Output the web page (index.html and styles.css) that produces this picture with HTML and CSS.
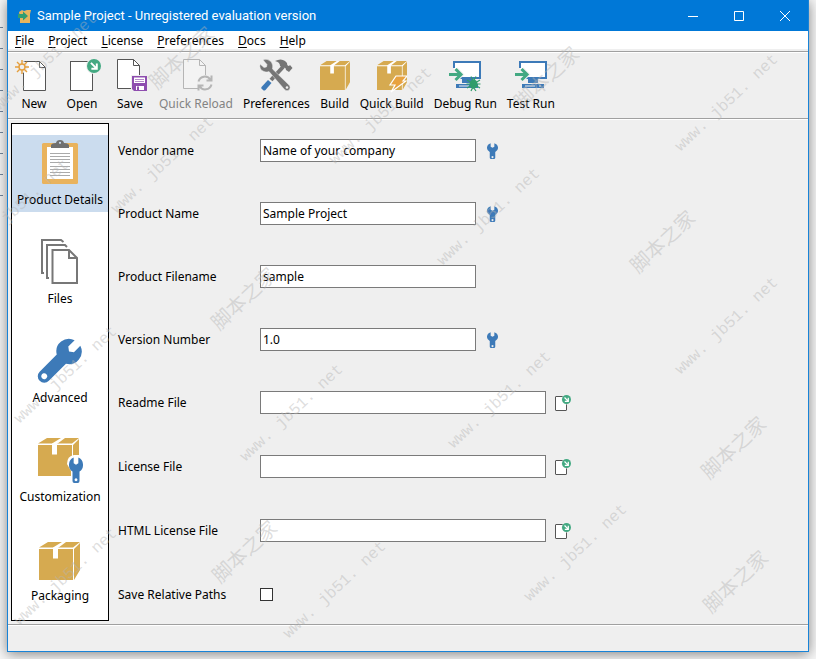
FILE: index.html
```html
<!DOCTYPE html>
<html lang="en">
<head>
<meta charset="utf-8">
<title>Sample Project</title>
<link rel="stylesheet" href="styles.css">
</head>
<body>
<svg class="defs" aria-hidden="true">
  <symbol id="box" viewBox="0 0 41 38" preserveAspectRatio="none">
    <path fill="#fff" d="M0 5.500 9 0H41V28L35 38H0Z"/>
    <path fill="#d6aa50" d="M0 7H34V38H0ZM0 5.500 9 0H41L34 5.500ZM35 7 41 1V28L35 38Z"/>
    <path fill="#fff" d="M14 16.500V5.500L23 0H27L19 6V16.500Z"/>
  </symbol>
  <symbol id="wrench" viewBox="0 0 24 40" preserveAspectRatio="none">
    <path fill="#3d7ab8" fill-rule="evenodd" d="M8 .7V9.500L12 12 16 9.500V.7A12 12 0 0 1 18 22.400V37Q18 40 15 40H9Q6 40 6 37V22.400A12 12 0 0 1 8 .7ZM12 32.500a2.400 2.400 0 1 0 .01 0Z"/>
  </symbol>
  <symbol id="go" viewBox="0 0 16 16">
    <circle cx="8" cy="8" r="8" fill="#43a982"/>
    <path d="M4.500 4.500 10.500 10.500M11.200 5V11.200H5" fill="none" stroke="#fff" stroke-width="2.200"/>
  </symbol>
  <symbol id="browse" viewBox="0 0 16 16">
    <rect x=".5" y="1.500" width="11" height="14" rx=".5" fill="#fff" stroke="#555"/>
    <circle cx="11.500" cy="4.500" r="5" fill="#efefef"/>
    <use href="#go" x="7" y="0" width="9" height="9"/>
  </symbol>
  <symbol id="monitor" viewBox="0 0 36 36">
    <path d="M7 5H33V21H7Z" fill="#fff"/>
    <path d="M7 11V5H33V21H12" fill="none" stroke="#3d7ab8" stroke-width="2"/>
    <path d="M15 22H25V26H15ZM9 27H31V31H9Z" fill="#3d7ab8"/>
    <path d="M12 29H22M26 29H28" stroke="#efefef"/>
    <path d="M2 17.500H13M8.500 12 14 17.500 8.500 23" fill="none" stroke="#efefef" stroke-width="5"/>
    <path d="M2 17.500H13M8.500 12 14 17.500 8.500 23" fill="none" stroke="#43a982" stroke-width="3"/>
  </symbol>
</svg>

<div class="window">
  <header class="titlebar">
    <svg class="app-icon" viewBox="0 0 14 14" aria-hidden="true">
      <path fill="#e6b45e" d="M1 3 4 1 6 2 9 1 13 1 12 5V14H2V9Z"/>
      <path fill="#2f9d72" d="M0 5H5V2.500L10 7 5 11.500V9H0Z"/>
    </svg>
    <h1 class="title">Sample Project - Unregistered evaluation version</h1>
    <button class="caption" aria-label="Minimize"><svg viewBox="0 0 10 10"><path d="M0 5.500H10"/></svg></button>
    <button class="caption" aria-label="Maximize"><svg viewBox="0 0 10 10"><path d="M.5 .5H9.500V9.500H.5Z"/></svg></button>
    <button class="caption" aria-label="Close"><svg viewBox="0 0 10 10"><path d="M0 0 10 10M10 0 0 10"/></svg></button>
  </header>

  <nav class="menubar">
    <a href="#file"><u>F</u>ile</a>
    <a href="#project"><u>P</u>roject</a>
    <a href="#license"><u>L</u>icense</a>
    <a href="#preferences"><u>P</u>references</a>
    <a href="#docs"><u>D</u>ocs</a>
    <a href="#help"><u>H</u>elp</a>
  </nav>

  <div class="toolbar">
    <button class="tool">
      <svg class="tool-icon wide" viewBox="0 0 40 36">
        <path d="M9.500 4.500H25.500L31.500 10.500V33.500H9.500Z" fill="#fff" stroke="#555"/>
        <path d="M25.500 4.500V10.500H31.500" fill="none" stroke="#555"/>
        <circle cx="8" cy="10" r="6" fill="#efefef"/>
        <g stroke="#e59f3d" stroke-width="1.400" fill="none"><circle cx="8" cy="10" r="3"/><path d="M8 3V7M8 13V17M1 10H5M11 10H15M3 5 6 8M10 12 13 15M13 5 10 8M6 12 3 15"/></g>
      </svg>New</button>
    <button class="tool">
      <svg class="tool-icon wide" viewBox="0 0 40 36">
        <rect x="8.500" y="4.500" width="22" height="29" fill="#fff" stroke="#555"/>
        <circle cx="32" cy="9" r="8" fill="#efefef"/><use href="#go" x="25" y="2" width="14" height="14"/>
      </svg>Open</button>
    <button class="tool">
      <svg class="tool-icon wide" viewBox="0 0 40 36">
        <path d="M7.500 2.500H23.500L29.500 8.500V31.500H7.500Z" fill="#fff" stroke="#555"/>
        <path d="M23.500 2.500V8.500H29.500" fill="none" stroke="#555"/>
        <path d="M21 18H38V35H21Z" fill="#efefef"/>
        <path d="M22 19H37V34H24L22 32Z" fill="#8e4daf"/>
        <path d="M24 20.500H35V26H24ZM26 29H34V33H26Z" fill="#fff"/>
        <path d="M25 22.500H34M25 24.500H34" stroke="#b48bc9"/><path d="M27 29.500H29V33H27Z" fill="#8e4daf"/>
      </svg>Save</button>
    <button class="tool spaced" disabled>
      <svg class="tool-icon wide" viewBox="0 0 40 36">
        <path d="M7.500 2.500H23.500L29.500 8.500V31.500H7.500Z" fill="#f3f3f3" stroke="#b5b5b5"/>
        <path d="M23.500 2.500V8.500H29.500" fill="none" stroke="#b5b5b5"/>
        <circle cx="29" cy="26" r="8" fill="#efefef"/>
        <path d="M22.500 24.500A6.500 6.500 0 0 1 34.500 23M35.500 27.500A6.500 6.500 0 0 1 23.500 29M35.500 18.500V23.500H30.500M22.500 33.500V28.500H27.500" fill="none" stroke="#b5b5b5" stroke-width="2"/>
      </svg>Quick Reload</button>
    <button class="tool spaced">
      <svg class="tool-icon" viewBox="0 0 36 36">
        <path d="M13 23 25 10" stroke="#757575" stroke-width="4"/>
        <path d="M3.500 30 10 23 13.500 26 7.500 33Q6 34 5 33L3.500 31.500Q3 31 3.500 30Z" fill="#3d7ab8"/>
        <path d="M17 4Q23 1 27 4L29 6Q29 9 31 9L32 8 34.500 11 31 15 28 13Q28 10 25 11L22 9Q22 5 17 4Z" fill="#757575"/>
        <path d="M5 3 9 7.500 8.500 10 6 10.500 2 7Q1 13 6 14.500 9 15.500 11 14.500L26.500 32.500Q29 35 31.500 32.500 33 30 31 28L14.500 12Q15.500 8 13 4.500 9 1 5 3Z" fill="#757575" stroke="#efefef" stroke-width=".5"/>
        <circle cx="29" cy="30.500" r="1.300" fill="#efefef"/>
      </svg>Preferences</button>
    <button class="tool spaced">
      <svg class="tool-icon narrow" viewBox="0 0 30 36"><use href="#box" x="0" y="4" width="30" height="29"/></svg>Build</button>
    <button class="tool spaced">
      <svg class="tool-icon narrow" viewBox="0 0 30 36"><use href="#box" x="0" y="4" width="30" height="29"/>
        <path d="M19 19H30L26 24H29L14 35 18 28H13Z" fill="#e8a23f" stroke="#fff" stroke-width="1.200"/></svg>Quick Build</button>
    <button class="tool spaced">
      <svg class="tool-icon" viewBox="0 0 36 36"><use href="#monitor" width="36" height="36"/>
        <ellipse cx="26.500" cy="27" rx="4" ry="4.500" fill="#2f9d6a"/>
        <path d="M20 23 33 31M33 23 20 31M19.500 27H33.500M24 19.500 26.500 24 29 19.500M24 34 26 30 29 34" fill="none" stroke="#2f9d6a" stroke-width="1.200"/></svg>Debug Run</button>
    <button class="tool spaced">
      <svg class="tool-icon" viewBox="0 0 36 36"><use href="#monitor" width="36" height="36"/></svg>Test Run</button>
  </div>

  <div class="content">
    <nav class="sidebar">
      <button class="page selected" aria-current="page">
        <svg viewBox="0 0 48 48">
          <rect x="6" y="5" width="36" height="41" rx="1.500" fill="#e9b35d"/>
          <path d="M11 9H37V41H11Z" fill="#fff"/>
          <path d="M14 15.500H34M14 18.500H34M14 21.500H34M14 24.500H34M14 28.500H34M14 31.500H34M14 34.500H34M14 37.500H34" stroke="#aaa"/>
          <path d="M15 10V7Q16 5 20 5 20.500 2 24 2T28 5Q32 5 33 7V10Z" fill="#707070"/><circle cx="24" cy="4.800" r="1.100" fill="#cbdcee"/>
        </svg>Product Details</button>
      <button class="page">
        <svg viewBox="0 0 48 48" fill="none" stroke="#777" stroke-width="2">
          <path d="M8 36H6V3H25L27.500 5"/><path d="M13 41H11V8H29L31 10"/>
          <path d="M16.500 13H33L41 21V46H16.500Z" fill="#fff"/><path d="M33 13V21H41"/>
        </svg>Files</button>
      <button class="page">
        <svg viewBox="0 0 48 48"><path transform="translate(33 15.500) rotate(45)" fill="#3d7ab8" fill-rule="evenodd" d="M-4-12V-3L0 0 4-3V-12A12.600 12.600 0 0 1 6.500 10.800V35A6.500 6.500 0 0 1-6.500 35V10.800A12.600 12.600 0 0 1-4-12ZM0 32a3 3 0 1 0 .01 0Z"/></svg>Advanced</button>
      <button class="page">
        <svg viewBox="0 0 48 48"><use href="#box" x="2" y="3" width="41" height="38"/>
          <path d="M31 29Q31 21 38 20H43Q49 23 49 30L45 36V48H35V36Z" fill="#fff"/><use href="#wrench" x="33" y="22" width="14" height="26"/></svg>Customization</button>
      <button class="page">
        <svg viewBox="0 0 48 48"><use href="#box" x="3" y="8" width="41" height="38"/></svg>Packaging</button>
    </nav>

    <form class="form">
      <div class="row"><label for="vendor">Vendor name</label><input class="field" id="vendor" type="text" value="Name of your company"><button class="pick" type="button" aria-label="Vendor options"><svg viewBox="0 0 16 16"><use href="#wrench" x="2" y="0" width="11" height="16"/></svg></button></div>
      <div class="row"><label for="product">Product Name</label><input class="field" id="product" type="text" value="Sample Project"><button class="pick" type="button" aria-label="Product options"><svg viewBox="0 0 16 16"><use href="#wrench" x="2" y="0" width="11" height="16"/></svg></button></div>
      <div class="row"><label for="filename">Product Filename</label><input class="field" id="filename" type="text" value="sample"></div>
      <div class="row"><label for="version">Version Number</label><input class="field" id="version" type="text" value="1.0"><button class="pick" type="button" aria-label="Version options"><svg viewBox="0 0 16 16"><use href="#wrench" x="2" y="0" width="11" height="16"/></svg></button></div>
      <div class="row file"><label for="readme">Readme File</label><input class="field" id="readme" type="text"><button class="pick" type="button" aria-label="Browse readme"><svg viewBox="0 0 16 16"><use href="#browse" width="16" height="16"/></svg></button></div>
      <div class="row file"><label for="license">License File</label><input class="field" id="license" type="text"><button class="pick" type="button" aria-label="Browse license"><svg viewBox="0 0 16 16"><use href="#browse" width="16" height="16"/></svg></button></div>
      <div class="row file"><label for="html">HTML License File</label><input class="field" id="html" type="text"><button class="pick" type="button" aria-label="Browse HTML license"><svg viewBox="0 0 16 16"><use href="#browse" width="16" height="16"/></svg></button></div>
      <div class="row"><label for="relative">Save Relative Paths</label><input class="check" id="relative" type="checkbox"></div>
    </form>
  </div>
  <footer class="status"></footer>
</div>

<div class="marks" aria-hidden="true">
  <span class="mark m1">www. jb51. net</span>
  <span class="mark m2">www. jb51. net</span>
  <span class="mark m3">www. jb51. net</span>
  <span class="mark m4">www. jb51. net</span>
  <span class="mark m5">www. jb51. net</span>
  <span class="mark m6">www. jb51. net</span>
  <span class="mark m7">www. jb51. net</span>
  <span class="mark m8">www. jb51. net</span>
  <span class="mark m9">www. jb51. net</span>
  <span class="mark m10">www. jb51. net</span>
  <span class="mark m11">www. jb51. net</span>
  <span class="mark m12">www. jb51. net</span>
  <span class="mark m13">www. jb51. net</span>
  <span class="mark han h1" lang="zh">脚本之家</span>
  <span class="mark han h2" lang="zh">脚本之家</span>
  <span class="mark han h3" lang="zh">脚本之家</span>
  <span class="mark han h4" lang="zh">脚本之家</span>
  <span class="mark han h5" lang="zh">脚本之家</span>
  <span class="mark han h6" lang="zh">脚本之家</span>
  <span class="mark han h7" lang="zh">脚本之家</span>
</div>
</body>
</html>
```
FILE: styles.css
```css
* { box-sizing: border-box; }

body {
  margin: 0;
  min-height: 100vh;
  padding: 0 7px 7px;
  display: flex;
  position: relative;
  overflow: hidden;
  background:
    repeating-linear-gradient(#0000 0 6px, #71859c 6px 7px, #0000 7px 21px) 0 21px / 3px 182px no-repeat,
    #f6f6f6;
  font: 12px/18px "Noto Sans", "Noto Sans CJK SC", sans-serif;
  color: #000;
}

button, input { font: inherit; color: inherit; }
button { padding: 0; border: 0; background: none; }
svg { display: block; }
.defs { position: absolute; width: 0; height: 0; }

.window {
  flex: 1;
  display: flex;
  flex-direction: column;
  border: 1px solid #1883d7;
  border-top: 0;
  background: #efefef;
  box-shadow: 0 2px 12px #0007;
}

.titlebar {
  display: flex;
  align-items: center;
  height: 31px;
  padding-left: 10px;
  background: #0078d7;
  color: #fff;
}
.app-icon { width: 14px; height: 14px; margin-right: 5px; }
.title { flex: 1; margin: 0; font: 13px/18px Roboto, sans-serif; }
.caption { width: 46px; height: 31px; display: grid; place-items: center; }
.caption svg { width: 10px; height: 10px; fill: none; stroke: #fff; }

.menubar {
  display: flex;
  gap: 14px;
  height: 20px;
  padding: 1px 7px 0;
  background: #fff;
  border-bottom: 2px solid #efefef;
}
.menubar a { color: inherit; text-decoration: none; }
.menubar u { text-underline-offset: 2px; }

.toolbar {
  display: flex;
  align-items: flex-start;
  gap: 8px;
  padding: 5px 6px;
  border-top: 1px solid #a0a0a0;
  box-shadow: inset 0 1px #fff;
}
.tool {
  display: flex;
  flex-direction: column;
  align-items: center;
  gap: 2px;
  white-space: nowrap;
}
.tool.spaced { padding: 0 1px; }
.tool:disabled { color: #838383; }
.tool-icon { width: 36px; height: 36px; }
.tool-icon.wide { width: 40px; }
.tool-icon.narrow { width: 30px; }

.content {
  flex: 1;
  display: flex;
  gap: 9px;
  padding: 4px 3px 3px;
  border: solid #a0a0a0;
  border-width: 1px 0;
  box-shadow: inset 0 1px #fff;
}
.sidebar {
  width: 98px;
  display: flex;
  flex-direction: column;
  gap: 22px;
  padding: 11px 0 12px;
  border: 1px solid #000;
  background: #fff;
}
.page {
  display: flex;
  flex-direction: column;
  align-items: center;
  gap: 5px;
  padding: 3px 0;
  white-space: nowrap;
}
.page svg { width: 48px; height: 48px; }
.page.selected { background: #cbdcee; }

.form {
  flex: 1;
  display: flex;
  flex-direction: column;
  gap: 40px;
  padding-top: 16px;
}
.row { display: flex; align-items: center; height: 23px; }
.row.file { height: 24px; padding-bottom: 1px; }
.row label { width: 142px; }
.field {
  width: 216px;
  height: 23px;
  padding: 0 2px;
  border: 1px solid #7a7a7a;
  background: #fff;
}
.file .field { width: 286px; }
.pick { margin-left: 9px; }
.pick svg { width: 16px; height: 16px; }
.check {
  appearance: none;
  width: 13px;
  height: 13px;
  margin: 0;
  border: 1px solid #333;
  background: #fff;
}
.status { height: 26px; box-shadow: inset 0 1px #fff; }

.marks { position: absolute; inset: 0; overflow: hidden; pointer-events: none; }
.mark {
  position: absolute;
  transform: translate(-50%, -50%) rotate(-43deg);
  font: 16px/20px "Liberation Mono", monospace;
  white-space: nowrap;
  color: #b4b4b470;
}
.han { font: 20px/24px "Noto Sans CJK SC", sans-serif; }
.m1 { left: 46px; top: 62px; }
.m2 { left: 163px; top: 165px; }
.m3 { left: 381px; top: 116px; }
.m4 { left: 727px; top: 103px; }
.m5 { left: 489px; top: 217px; }
.m6 { left: 727px; top: 326px; }
.m7 { left: 292px; top: 413px; }
.m8 { left: 500px; top: 400px; }
.m9 { left: 576px; top: 553px; }
.m10 { left: 335px; top: 590px; }
.m11 { left: 66px; top: 375px; }
.m12 { left: 66px; top: 577px; }
.m13 { left: 18px; top: 208px; }
.h1 { left: 181px; top: 57px; }
.h2 { left: 546px; top: 77px; }
.h3 { left: 662px; top: 241px; }
.h4 { left: 243px; top: 298px; }
.h5 { left: 733px; top: 447px; }
.h6 { left: 244px; top: 551px; }
.h7 { left: 735px; top: 581px; }
```
